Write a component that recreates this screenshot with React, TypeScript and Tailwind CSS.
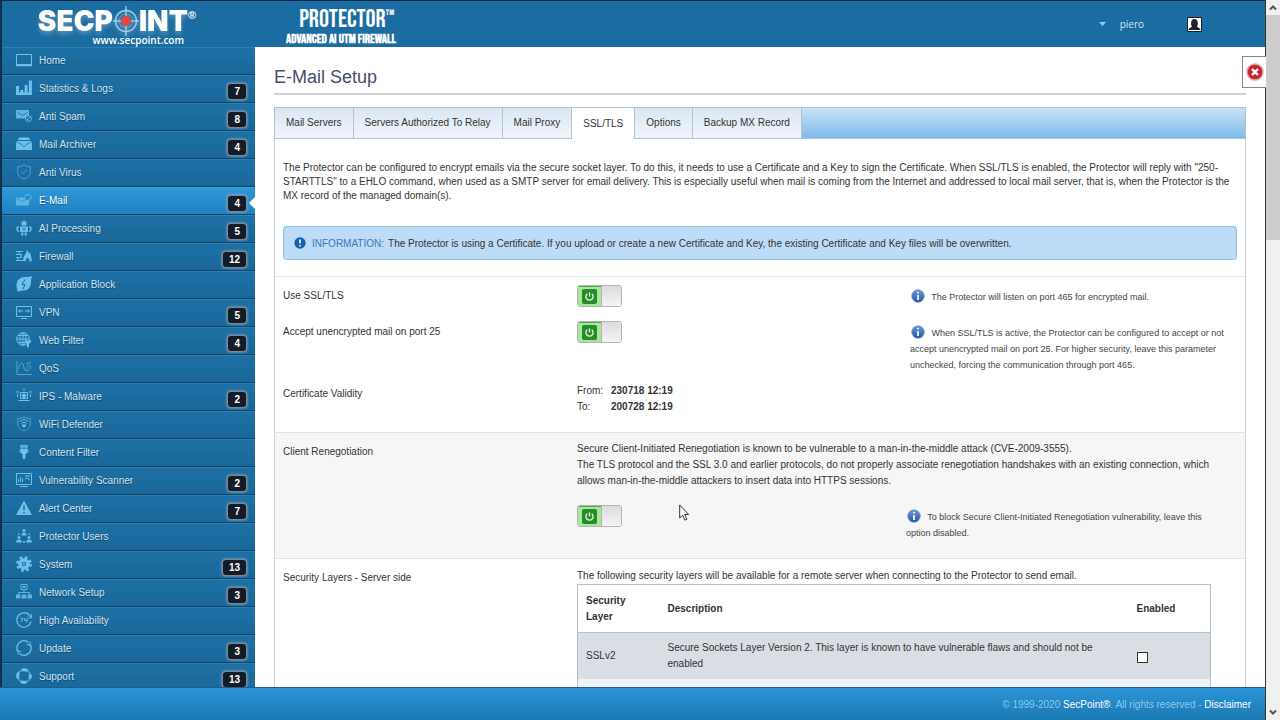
import { useState } from 'react';
import type { ReactNode } from 'react';

type MenuItem = {
  label: string;
  count?: number;
  active?: boolean;
  icon: ReactNode;
};

const menu: MenuItem[] = [
  {
    label: 'Home',
    icon: (
      <>
        <path d="M.5 2.500h15v10H.5z" />
        <path d="M0 13.500h16" strokeWidth="1.500" />
      </>
    ),
  },
  {
    label: 'Statistics & Logs',
    count: 7,
    icon: <path d="M0 6h3v9H0zM4.300 10h3v5h-3zM8.600 5h3v10h-3zM12.900.500h3V15h-3zM3 12.500h10V15H3z" fill="currentColor" stroke="none" />,
  },
  {
    label: 'Anti Spam',
    count: 8,
    icon: (
      <>
        <path d="M0 2h13v8.500H0z" fill="currentColor" stroke="none" opacity=".85" />
        <path d="M1.500 4.500l5 3 5-3" stroke="#1b6ca0" strokeWidth=".8" />
        <circle cx="12.500" cy="10.500" r="2.900" fill="#1b6ca0" />
        <path d="M10.600 12.500l3.800-4" />
      </>
    ),
  },
  {
    label: 'Mail Archiver',
    count: 4,
    icon: (
      <>
        <path d="M3 1.500h10l1 2.500H2zM1 5h14l1 3v6H0V8z" fill="currentColor" stroke="none" />
        <path d="M2 6.500l3.500 1.800c0 2.500 5 2.500 5 0L14 6.500" stroke="#1b6ca0" strokeWidth=".8" />
      </>
    ),
  },
  {
    label: 'Anti Virus',
    icon: (
      <g opacity=".65">
        <path d="M8 .8c2 1.400 4.200 1.700 6.300 1.700v5.500c0 3.500-3 5.800-6.300 7-3.300-1.200-6.300-3.500-6.300-7V2.500C3.800 2.500 6 2.200 8 .8z" />
        <path d="M5 7.500l2.200 2.300L11 5.800" />
      </g>
    ),
  },
  {
    label: 'E-Mail',
    count: 4,
    active: true,
    icon: (
      <>
        <path d="M0 5.500h9l1 2.500h3v5.500H0z" fill="currentColor" stroke="none" opacity=".8" />
        <path d="M8.500 4.500c1-2.500 5.500-3 6.500 0 .5 2-.5 3-2 3.500" />
        <path d="M1 6.500l5 3 4-2" stroke="#2288c8" strokeWidth=".7" />
      </>
    ),
  },
  {
    label: 'AI Processing',
    count: 5,
    icon: (
      <>
        <path d="M5.500 1.500h5v4h-5zM4 6.500h8v5.500H4zM5.200 12.500h2.200v3H5.200zM8.600 12.500h2.200v3H8.600zM7.500 0h1v2.500h-1z" fill="currentColor" stroke="none" />
        <path d="M2.800 6.500c-2.500 1-2.500 4 0 5M13.200 6.500c2.500 1 2.500 4 0 5" strokeWidth="1.500" />
        <path d="M6.500 8.500h3M6.500 10h3" stroke="#1b6ca0" strokeWidth=".7" />
      </>
    ),
  },
  {
    label: 'Firewall',
    count: 12,
    icon: (
      <>
        <path d="M0 3.500h7M0 6.500h6M0 9.500h6M0 12.500h9M3 3.500v3M5 6.500v3M2 9.500v3" />
        <path d="M7 13c0-5 3-6 4-11.500 1 2.500 1.500 3 2 4 .5-1 .5-2 .5-2C15 7 16 11 15.500 13.500h-2c0-2-1-3-2-4-1 1-2 2-2 4z" fill="currentColor" stroke="none" />
      </>
    ),
  },
  {
    label: 'Application Block',
    icon: (
      <>
        <path d="M.5 9c0-5 4-8 8-8 3 0 5 0 7.500-1-.5 2-1 3.500-1 6 0 5-3 8.500-7.200 8.500-2 0-3.500.5-6.500 1C1.500 13.500.5 12 .5 9z" fill="currentColor" stroke="none" />
        <path d="M9 3.500l-3 5h3l-2 4.500" stroke="#1b6ca0" />
      </>
    ),
  },
  {
    label: 'VPN',
    count: 5,
    icon: (
      <>
        <path d="M.5 2.500h15v10H.5zM5 14.500h6" />
        <path d="M2.500 7h4.500M4 5.500L2.500 7 4 8.500M9 7h4.500M12 5.500L13.500 7 12 8.500" />
      </>
    ),
  },
  {
    label: 'Web Filter',
    count: 4,
    icon: (
      <>
        <circle cx="7" cy="7" r="6.300" />
        <path d="M.7 7h12.600M7 .7v12.600M2 3.500h10M2 10.500h7" />
        <ellipse cx="7" cy="7" rx="3" ry="6.300" />
        <path d="M8 8.500h8l-3 3.500v3l-2 .5V12z" fill="currentColor" stroke="none" />
      </>
    ),
  },
  {
    label: 'QoS',
    icon: (
      <g opacity=".7">
        <path d="M1 1v13.500h15M2.500 9c1-5 3-7 4.500-5s0 5 2 6 2-4 4-5 2 3 0 5-3 1-4 0" />
        <path d="M10 4l5-2" />
      </g>
    ),
  },
  {
    label: 'IPS - Malware',
    count: 2,
    icon: (
      <>
        <path d="M4.500 4.500h7v6h-7zM2.500 12.500h11M0 4h3M13 4h3M1.500 6v3M14.500 6v3M8 0v3" />
        <path d="M8 5.500l2 2H9V10H7V7.500H6z" fill="currentColor" />
      </>
    ),
  },
  {
    label: 'WiFi Defender',
    icon: (
      <>
        <path d="M8 .8c2 1.200 4 1.700 6.300 1.700v5.500c0 3.500-3 5.800-6.300 7-3.300-1.200-6.300-3.500-6.300-7V2.500c2.300 0 4.300-.5 6.300-1.700z" opacity=".6" />
        <path d="M3.500 5.500c3-2.500 6-2.500 9 0M5 7.500c2-1.600 4-1.600 6 0" />
        <path d="M6 9h4l-2 2.500z" fill="currentColor" />
      </>
    ),
  },
  {
    label: 'Content Filter',
    icon: (
      <>
        <path d="M4.500 1h7v5h-7zM3.500 6h9c0 2.500-2 3.500-3 4V14L8 15.500 6.500 14v-4C5.500 9.500 3.500 8.500 3.500 6z" fill="currentColor" stroke="none" />
        <path d="M5.500 3h5M5.500 4.500h5" stroke="#1b6ca0" strokeWidth=".7" />
      </>
    ),
  },
  {
    label: 'Vulnerability Scanner',
    count: 2,
    icon: (
      <>
        <path d="M.5 1.500h15v11H.5zM4 14.500h8" />
        <path d="M2.500 10V7M4.500 10V5M6.500 10V6.500M9 4h5M9 7l2-1 3 2" />
      </>
    ),
  },
  {
    label: 'Alert Center',
    count: 7,
    icon: (
      <>
        <path d="M8 .5L16 15H0z" fill="currentColor" stroke="none" />
        <path d="M8 5.500v5M8 12v1.500" stroke="#1b6ca0" strokeWidth="1.500" />
      </>
    ),
  },
  {
    label: 'Protector Users',
    icon: (
      <g fill="currentColor" stroke="none">
        <circle cx="8" cy="2.500" r="1.600" />
        <path d="M5.500 7.500c0-4 5-4 5 0z" />
        <circle cx="3" cy="9.500" r="1.500" />
        <circle cx="13" cy="9.500" r="1.500" />
        <path d="M0 14.500c0-4 6-4 6 0zM10 14.500c0-4 6-4 6 0zM7 13h2v1.500H7zM2 5.500h1.500V7H2zM12.500 5.500H14V7h-1.500z" />
      </g>
    ),
  },
  {
    label: 'System',
    count: 13,
    icon: (
      <>
        <circle cx="8" cy="8" r="6.400" strokeWidth="3" strokeDasharray="2.600 2.427" />
        <circle cx="8" cy="8" r="4" strokeWidth="3.500" />
        <circle cx="8" cy="8" r="1" />
      </>
    ),
  },
  {
    label: 'Network Setup',
    count: 3,
    icon: (
      <g opacity=".85">
        <path d="M5 .5h6v5H5zM8 5.500V9M2.500 11V8.500h11V11" />
        <path d="M0 10.500h4.500v4H0zM5.800 10.500h4.500v4H5.800zM11.500 10.500H16v4h-4.500zM6.500 2h3v2h-3z" fill="currentColor" stroke="none" />
      </g>
    ),
  },
  {
    label: 'High Availability',
    icon: (
      <>
        <path d="M14.500 5A7.200 7.200 0 1 0 15 9.500" strokeWidth="1.200" />
        <path d="M15.500 2v4h-4M4.500 6.500h2.500l-2 3.500M8.500 6v2.500h3M10.800 6v4.500" strokeWidth=".9" />
      </>
    ),
  },
  {
    label: 'Update',
    count: 3,
    icon: (
      <>
        <path d="M2 11.500A7 7 0 0 1 12.500 2.500M14 4.500A7 7 0 0 1 3.500 13.500" strokeWidth="1.500" />
        <path d="M10.500 4.500l3.500.5V1.500M5.500 11.500L2 11v3.500" />
      </>
    ),
  },
  {
    label: 'Support',
    count: 13,
    icon: (
      <>
        <circle cx="8" cy="8" r="6.300" strokeWidth="1.500" opacity=".7" />
        <circle cx="8" cy="8" r="6.300" strokeWidth="3" strokeDasharray="5.600 4.296" strokeDashoffset="2.800" />
      </>
    ),
  },
];

const tabs = ['Mail Servers', 'Servers Authorized To Relay', 'Mail Proxy', 'SSL/TLS', 'Options', 'Backup MX Record'];

function Logo() {
  return (
    <a href="#" className="flex w-[158px] flex-col items-end text-white">
      <span className="flex items-start">
        <span className="flex items-center font-['Inter',sans-serif] text-[28px] leading-6 font-black drop-shadow-[0_3px_2px_rgba(255,255,255,0.25)]">
          SECP
          <svg width="26" height="32" viewBox="0 0 26 32" fill="none" className="-my-1">
            <circle cx="13" cy="16" r="10.500" stroke="#9cc9e6" strokeWidth="1.500" />
            <circle cx="13" cy="16" r="7" stroke="#5f9cc4" />
            <path d="M13 1v30M0 16h26" stroke="#cfe4f2" />
            <circle cx="13" cy="16" r="5" fill="#e8453c" />
          </svg>
          INT
        </span>
        <sup className="top-0 text-[11px] leading-3 font-bold">®</sup>
      </span>
      <span className="mt-px mr-3 font-['Open_Sans',sans-serif] text-[10px] leading-3 font-semibold">www.secpoint.com</span>
    </a>
  );
}

function InfoIcon() {
  return (
    <svg width="14" height="14" viewBox="0 0 14 14" className="mr-1 ml-px inline-block align-[-3px]">
      <defs>
        <linearGradient id="info" x1="0" y1="0" x2="0" y2="1">
          <stop offset="0" stopColor="#6f9be0" />
          <stop offset="1" stopColor="#1f55a8" />
        </linearGradient>
      </defs>
      <circle cx="7" cy="7" r="6.300" fill="url(#info)" stroke="#6d8fc4" strokeWidth=".6" />
      <path d="M7 3v1.600M7 6v5" stroke="#fff" strokeWidth="1.700" />
    </svg>
  );
}

function Toggle({ id }: { id: string }) {
  const [on, setOn] = useState(true);

  return (
    <label className="relative flex h-[22px] w-[45px] shrink-0 overflow-hidden rounded-[3px] border border-[#b4b4b4]">
      <input id={id} type="checkbox" checked={on} onChange={() => setOn(!on)} className="sr-only" />
      <span className="flex w-[23px] items-center justify-center border-t border-[#4fa84a] bg-[#a5e89d]">
        <svg width="15" height="15" viewBox="0 0 15 15" fill="none">
          <rect width="15" height="15" rx="2" fill="#278a2b" />
          <path d="M7.500 3.500v4M5.300 4.700a3.600 3.600 0 1 0 4.400 0" stroke="#d9ffd2" strokeWidth="1.300" />
        </svg>
      </span>
      <span className="flex-1 border-l border-[#b4b4b4] bg-gradient-to-b from-[#dcdcdc] to-[#f4f4f4]" />
    </label>
  );
}

function Hint({ children }: { children: ReactNode }) {
  return (
    <p className="text-[9px] leading-4 text-[#444]">
      <InfoIcon /> {children}
    </p>
  );
}

function Sidebar() {
  return (
    <nav className="w-[255px] shrink-0 overflow-hidden border-l-2 border-[#10324d] bg-[#1b6ca0]">
      {menu.map((item) => (
        <a
          key={item.label}
          href="#"
          className={
            item.active
              ? 'relative flex h-7 items-center border-t border-b border-t-[#3f9fda] border-b-[#14466b] bg-gradient-to-b from-[#2e97d8] to-[#1f82c2] pr-[9px] pb-[2px] pl-[14px] text-white'
              : 'flex h-7 items-center border-t border-b border-t-[#2f7fb3] border-b-[#0f4369] bg-gradient-to-b from-[#1d70a5] to-[#1a679a] pr-[9px] pb-[2px] pl-[14px] text-[#cfe6f5]'
          }
        >
          <svg width="16" height="16" viewBox="0 0 16 16" fill="none" stroke="currentColor" className="shrink-0 text-[#6cc0ea]">
            {item.icon}
          </svg>
          <span className="ml-[7px] flex-1 text-[10px] [text-shadow:0_1px_1px_rgba(0,0,0,0.4)]">{item.label}</span>
          {item.count && (
            <span className="mt-[6px] rounded-[3px] bg-[#141c28] px-[6px] text-[10px] leading-[15px] font-bold text-white shadow-[0_0_0_1px_#78899a,0_0_3px_1px_#a3b1be]">
              {item.count}
            </span>
          )}
          {item.active && (
            <svg width="6" height="12" viewBox="0 0 6 12" className="absolute top-[9px] right-0">
              <path d="M6 0v12L0 6z" fill="#fff" />
            </svg>
          )}
        </a>
      ))}
    </nav>
  );
}

export default function App() {
  return (
    <div className="relative flex h-screen overflow-hidden bg-white font-['Liberation_Sans',Arial,sans-serif] text-[10px] text-[#333]">
      <div className="flex min-w-0 flex-1 flex-col border-r border-[#333]">
        {/* Header */}
        <header className="flex h-[47px] shrink-0 items-start border-t border-l-2 border-t-[#0d2a4a] border-l-[#10324d] bg-[#1b6ca0] pr-[63px] pl-9">
          <div className="pt-2">
            <Logo />
          </div>
          <div className="ml-[90px] flex flex-col items-center pt-[7px] font-['Bebas_Neue','Oswald','Noto_Sans_ExtraCondensed','Liberation_Sans_Narrow',sans-serif] whitespace-nowrap text-white">
            <div className="flex items-start pl-3 text-[25px] leading-6 font-semibold">
              PROTECTOR<span className="text-[15px] leading-4">™</span>
            </div>
            <div className="text-[13px] leading-[14px] font-bold">ADVANCED AI UTM FIREWALL</div>
          </div>
          <button type="button" className="mt-4 ml-auto flex items-center gap-[14px] font-['Open_Sans',sans-serif] leading-[14px] text-[#cfe6f5]">
            <svg width="7" height="4" viewBox="0 0 7 4">
              <path d="M0 0h7L3.500 4z" fill="#8fd0f2" />
            </svg>
            piero
          </button>
          <a href="#" aria-label="Profile" className="mt-4 ml-[43px]">
            <svg width="15" height="15" viewBox="0 0 15 15">
              <path d="M.5.500h14v14H.5z" fill="#fff" stroke="#16222e" />
              <path d="M1.500 13c0-2 3-2.500 3.500-3.500C3.500 8 3.500 2 7.500 2S11.500 8 10 9.500c.5 1 3.500 1.500 3.500 3.500z" fill="#222" />
            </svg>
          </a>
        </header>

        <div className="flex min-h-0 flex-1">
          <Sidebar />

          <main className="min-w-0 flex-1 overflow-hidden pr-[19px] pl-[19px]">
            <h1 className="border-b-2 border-[#d2d2d6] pt-[18px] pb-1 text-[18px] leading-6 text-[#434f6b]">E-Mail Setup</h1>

            {/* Tabs */}
            <div className="mt-3 flex h-8 border border-[#a9c4d6] bg-gradient-to-b from-[#c9e2f5] to-[#7cbbe8]">
              {tabs.map((tab) => (
                <button
                  key={tab}
                  type="button"
                  className={
                    tab === 'SSL/TLS'
                      ? '-mb-px border-r border-[#b5c3cf] bg-white px-[11px]'
                      : 'border-r border-[#b5c3cf] bg-gradient-to-b from-[#d9e7f3] to-[#f1f5fa] px-[11px] pb-[2px]'
                  }
                >
                  {tab}
                </button>
              ))}
            </div>

            <div className="border-x border-[#c9d3e0]">
              <div className="px-2 pt-[22px] pb-4">
                <p className="leading-[14px]">
                  The Protector can be configured to encrypt emails via the secure socket layer. To do this, it needs to use a Certificate and a Key to sign the Certificate. When SSL/TLS is enabled, the Protector will reply with "250-STARTTLS" to a EHLO command, when used as a SMTP server for email delivery. This is especially useful when mail is coming from the Internet and addressed to local mail server, that is, when the Protector is the MX record of the managed domain(s).
                </p>
                <div className="mt-[23px] flex h-[34px] items-center rounded-[3px] border border-[#92bfe6] bg-[#bddcf8] px-[10px]">
                  <svg width="12" height="12" viewBox="0 0 12 12">
                    <circle cx="6" cy="6" r="5.700" fill="#1660ae" />
                    <path d="M6 2.500v4M6 8v1.600" stroke="#fff" strokeWidth="1.600" />
                  </svg>
                  <span className="ml-[6px] text-[#3a78b8]">INFORMATION:</span>
                  <span className="ml-1">
                    The Protector is using a Certificate. If you upload or create a new Certificate and Key, the existing Certificate and Key files will be overwritten.
                  </span>
                </div>
              </div>

              <div className="h-[156px] border-t border-[#e4e6ea] px-2 pt-2">
                <div className="flex h-9 items-start">
                  <label htmlFor="ssl" className="w-[294px] shrink-0 pt-[3px] leading-4">Use SSL/TLS</label>
                  <Toggle id="ssl" />
                  <div className="ml-auto w-[327px] pt-1 pr-2">
                    <Hint>The Protector will listen on port 465 for encrypted mail.</Hint>
                  </div>
                </div>
                <div className="flex h-[62px] items-start">
                  <label htmlFor="plain" className="w-[294px] shrink-0 pt-[3px] leading-4">Accept unencrypted mail on port 25</label>
                  <Toggle id="plain" />
                  <div className="ml-auto w-[327px] pt-1 pr-2">
                    <Hint>
                      When SSL/TLS is active, the Protector can be configured to accept or not accept unencrypted mail on port 25. For higher security, leave this parameter unchecked, forcing the communication through port 465.
                    </Hint>
                  </div>
                </div>
                <div className="flex items-start leading-4">
                  <div className="w-[294px] shrink-0 pt-[3px]">Certificate Validity</div>
                  <dl className="grid grid-cols-[34px_auto]">
                    <dt>From:</dt>
                    <dd className="font-bold">230718 12:19</dd>
                    <dt>To:</dt>
                    <dd className="font-bold">200728 12:19</dd>
                  </dl>
                </div>
              </div>

              <div className="flex h-[126px] items-start border-t border-[#e0e3e8] bg-[#f6f6f7] pt-2 pr-[34px] pl-2 leading-4">
                <label htmlFor="renegotiation" className="w-[294px] shrink-0 pt-[3px]">Client Renegotiation</label>
                <div className="flex-1">
                  <p>
                    Secure Client-Initiated Renegotiation is known to be vulnerable to a man-in-the-middle attack (CVE-2009-3555).
                    <br />
                    The TLS protocol and the SSL 3.0 and earlier protocols, do not properly associate renegotiation handshakes with an existing connection, which allows man-in-the-middle attackers to insert data into HTTPS sessions.
                  </p>
                  <div className="mt-4 flex items-start justify-between">
                    <Toggle id="renegotiation" />
                    <div className="w-[305px] pt-1">
                      <Hint>To block Secure Client-Initiated Renegotiation vulnerability, leave this option disabled.</Hint>
                    </div>
                  </div>
                </div>
              </div>

              <div className="flex items-start border-t border-[#e0e3e8] pt-[9px] pr-[34px] pl-2 leading-4">
                <div className="w-[294px] shrink-0 pt-[2px]">Security Layers - Server side</div>
                <div className="flex-1">
                  <p>The following security layers will be available for a remote server when connecting to the Protector to send email.</p>
                  <table className="w-full border border-[#b9bfc8] text-left">
                    <thead>
                      <tr className="h-12 border-b border-[#b9bfc8]">
                        <th className="w-[81px] px-2">Security Layer</th>
                        <th className="px-[9px]">Description</th>
                        <th className="w-[83px] px-[9px]">Enabled</th>
                      </tr>
                    </thead>
                    <tbody>
                      <tr className="h-[46px] bg-[#d9dde4]">
                        <td className="px-2">SSLv2</td>
                        <td className="pr-7 pl-[9px]">
                          Secure Sockets Layer Version 2. This layer is known to have vulnerable flaws and should not be enabled
                        </td>
                        <td className="px-[9px]">
                          <input type="checkbox" aria-label="Enable SSLv2" className="mt-1 block size-[11px] appearance-none border border-[#333] bg-white" />
                        </td>
                      </tr>
                      <tr className="h-[46px] bg-[#f0f0f7]">
                        <td />
                        <td />
                        <td />
                      </tr>
                    </tbody>
                  </table>
                </div>
              </div>
            </div>
          </main>
        </div>

        {/* Footer */}
        <footer className="flex h-[33px] shrink-0 items-center justify-end border-t border-[#1a5f94] bg-gradient-to-b from-[#2c96d8] to-[#1978b2] pr-[14px] text-[#8ec8ee]">
          <p>
            © 1999-2020 <a href="#" className="text-white">SecPoint®</a>. All rights reserved - <a href="#" className="text-white">Disclaimer</a>
          </p>
        </footer>
      </div>

      {/* Scrollbar */}
      <div className="flex w-[14px] shrink-0 flex-col items-center bg-[#f0f0f0]">
        <svg width="14" height="15" viewBox="0 0 14 15" fill="none" stroke="#555" strokeWidth="2">
          <path d="M4 9.500L7 6.500l3 3" />
        </svg>
        <div className="h-[225px] w-full bg-[#cdcdcd]" />
        <svg width="14" height="15" viewBox="0 0 14 15" fill="none" stroke="#555" strokeWidth="2" className="mt-auto">
          <path d="M4 5.500l3 3 3-3" />
        </svg>
      </div>

      <button
        type="button"
        aria-label="Close"
        className="absolute top-14 right-[14px] flex h-8 w-6 items-center justify-center border border-r-0 border-[#888] bg-white"
      >
        <svg width="18" height="18" viewBox="0 0 18 18">
          <circle cx="9" cy="9" r="8" fill="#c1272d" stroke="#d9a5a5" strokeWidth="1.500" />
          <path d="M6 6l6 6M12 6l-6 6" stroke="#fff" strokeWidth="2.400" />
        </svg>
      </button>

      <svg width="12" height="18" viewBox="0 0 12 18" className="pointer-events-none absolute top-[504px] left-[679px]">
        <path d="M.7 1v13l3-2.800 2.200 5 2-.9-2.200-4.800h4z" fill="#fff" stroke="#333" />
      </svg>
    </div>
  );
}
